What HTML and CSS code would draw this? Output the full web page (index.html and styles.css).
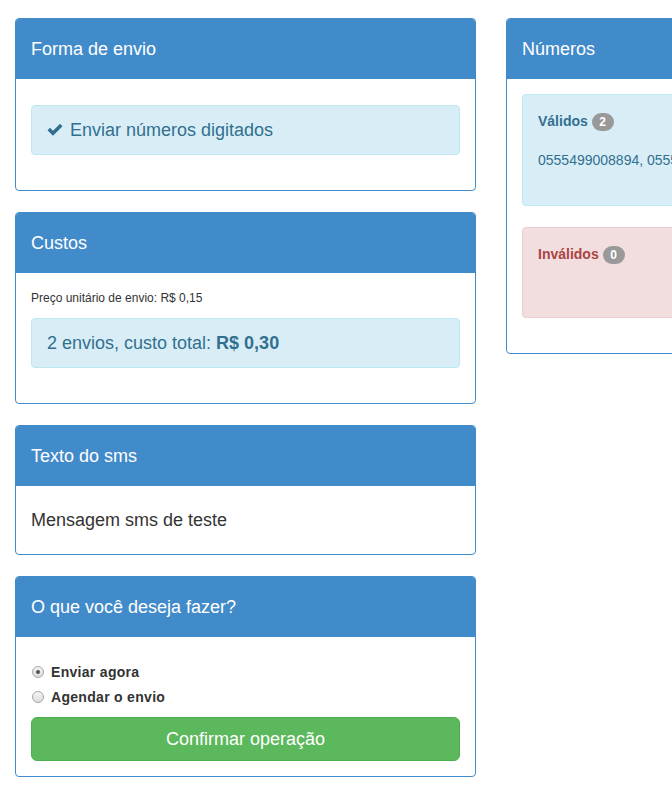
FILE: index.html
```html
<!DOCTYPE html>
<html>
<head>
    <meta charset="UTF-8">
    <title>Envio de SMS</title>
    <link rel="stylesheet" href="styles.css">
</head>
<body>
    <div class="page">
        <div class="column">
            <div class="panel">
                <div class="panel-heading">Forma de envio</div>
                <div class="panel-body">
                    <div class="alert alert-info alert-spaced">
                        <svg class="icon-ok" width="16" height="14" viewBox="0 0 16 14">
                            <path d="M0.5 7.2 L3 4.8 L6 7.8 L13 0.8 L15.5 3.3 L6 12.8 Z" fill="#31708f"/>
                        </svg>
                        Enviar números digitados
                    </div>
                </div>
            </div>

            <div class="panel">
                <div class="panel-heading">Custos</div>
                <div class="panel-body">
                    <div class="unit-price">Preço unitário de envio: R$ 0,15</div>
                    <div class="alert alert-info">2 envios, custo total: <strong>R$ 0,30</strong></div>
                </div>
            </div>

            <div class="panel">
                <div class="panel-heading">Texto do sms</div>
                <div class="panel-body">
                    <p class="sms-text">Mensagem sms de teste</p>
                </div>
            </div>

            <div class="panel">
                <div class="panel-heading">O que você deseja fazer?</div>
                <div class="panel-body">
                    <div class="radio-list">
                        <label class="radio-option">
                            <input type="radio" name="acao" value="agora" checked>
                            Enviar agora
                        </label>
                        <label class="radio-option">
                            <input type="radio" name="acao" value="agendar">
                            Agendar o envio
                        </label>
                    </div>
                    <button class="button confirm-button">Confirmar operação</button>
                </div>
            </div>
        </div>

        <div class="column">
            <div class="panel">
                <div class="panel-heading">Números</div>
                <div class="panel-body">
                    <div class="alert alert-info numbers-box">
                        <div class="numbers-title">Válidos <span class="badge">2</span></div>
                        <div class="numbers-list">0555499008894, 0555499008895</div>
                    </div>
                    <div class="alert alert-danger numbers-box">
                        <div class="numbers-title">Inválidos <span class="badge">0</span></div>
                        <div class="numbers-list"></div>
                    </div>
                </div>
            </div>
        </div>
    </div>
</body>
</html>
```

FILE: styles.css
```css
html, body {
    overflow: hidden;
}

body {
    font-family: "Liberation Sans", Arial, Helvetica, sans-serif;
    font-size: 14px;
    line-height: 20px;
    color: #333;
    background-color: #fff;
    margin: 0;
}

.page {
    display: grid;
    grid-template-columns: 461px 461px;
    column-gap: 30px;
    align-items: start;
    padding: 18px 15px;
    width: 982px;
    box-sizing: border-box;
}

.column {
    display: flex;
    flex-direction: column;
    gap: 21px;
}

.panel {
    border: 1px solid #428bca;
    border-radius: 4px;
    background-color: #fff;
    overflow: hidden;
}

.panel-heading {
    background-color: #428bca;
    color: #fff;
    font-size: 18px;
    line-height: 20px;
    padding: 20px 15px;
}

.panel-body {
    padding: 15px;
}

.alert {
    border: 1px solid transparent;
    border-radius: 4px;
    padding: 15px;
    margin-bottom: 20px;
    font-size: 18px;
    line-height: 18px;
}

.alert-spaced {
    margin-top: 11px;
}

.alert-info {
    background-color: #d9edf7;
    border-color: #bce8f1;
    color: #31708f;
}

.alert-danger {
    background-color: #f2dede;
    border-color: #ebccd1;
    color: #a94442;
}

.icon-ok {
    vertical-align: -1px;
    margin-right: 2px;
}

.unit-price {
    font-size: 12px;
    line-height: 20px;
    margin-bottom: 10px;
}

.sms-text {
    font-size: 18px;
    line-height: 18px;
    margin: 10px 0;
}

.radio-list {
    display: flex;
    flex-direction: column;
    gap: 5px;
    margin: 10px 0;
}

.radio-option {
    display: flex;
    align-items: center;
    gap: 7px;
    font-weight: bold;
    letter-spacing: 0.3px;
    line-height: 20px;
}

.radio-option input[type="radio"] {
    appearance: none;
    -webkit-appearance: none;
    margin: 0 0 0 1px;
    width: 12px;
    height: 12px;
    border-radius: 50%;
    border: 1px solid #a8a8a8;
    background: linear-gradient(#f4f4f4, #dcdcdc);
    display: grid;
    place-content: center;
}

.radio-option input[type="radio"]:checked::before {
    content: "";
    width: 4px;
    height: 4px;
    border-radius: 50%;
    background-color: #555;
}

.button {
    display: block;
    width: 100%;
    padding: 10px 16px;
    font-family: inherit;
    font-size: 18px;
    line-height: 22px;
    border-radius: 6px;
    border: 1px solid transparent;
    cursor: pointer;
}

.confirm-button {
    background-color: #5cb85c;
    border-color: #4cae4c;
    color: #fff;
}

.numbers-box {
    display: flex;
    flex-direction: column;
    font-size: 14px;
    line-height: 20px;
    padding-top: 16px;
    margin-bottom: 21px;
}

.numbers-box:last-child {
    margin-bottom: 20px;
}

.numbers-title {
    font-weight: bold;
}

.numbers-list {
    margin: 19px 0 20px;
    white-space: nowrap;
}

.numbers-list:empty {
    height: 0;
    margin-bottom: 19px;
}

.badge {
    display: inline-block;
    min-width: 10px;
    padding: 3px 6px;
    font-size: 12px;
    font-weight: bold;
    line-height: 12px;
    color: #fff;
    text-align: center;
    background-color: #999;
    border-radius: 10px;
    vertical-align: 0;
}
```
